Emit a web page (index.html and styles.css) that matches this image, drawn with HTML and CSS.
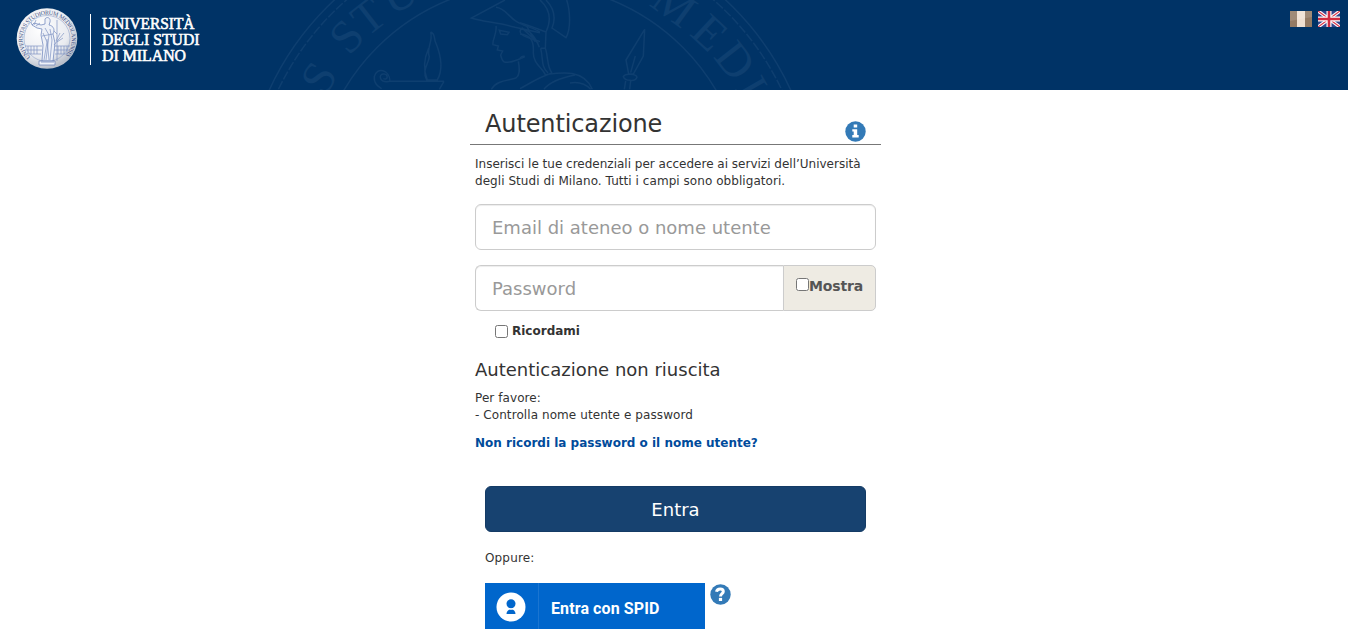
FILE: index.html
```html
<!DOCTYPE html>
<html lang="it">

<head>
    <meta charset="UTF-8" />
    <meta name="viewport" content="width=device-width, initial-scale=1.0" />
    <title>Autenticazione - Università degli Studi di Milano</title>
    <link rel="stylesheet" href="styles.css">
</head>

<body>

    <header class="header">
        <!-- watermark of the seal -->
        <svg class="header-bg" width="560" height="90" viewBox="260 0 560 90" aria-hidden="true">
            <g class="wm-line">
                <circle cx="530" cy="210" r="287" />
                <circle cx="530" cy="210" r="279" stroke-dasharray="9 2" />
                <circle cx="530" cy="200" r="216" />
                <g transform="translate(260 0) scale(.3333)" stroke-width="4.5">
                    <path d="M735 0L634 54C670 66 720 68 765 82L840 98M708 22C735 24 745 50 770 65C795 80 820 82 840 96M718 91L747 97L742 104L722 102ZM708 78C712 100 696 120 699 134L715 138L712 150L728 153L722 165C728 190 735 188 750 186C765 184 780 176 795 170M775 184C780 210 780 225 768 234C745 242 710 240 694 268M785 84C770 105 795 110 840 125" />
                    <path d="M512 96C528 102 520 115 528 130C540 160 552 205 532 240H500C485 210 505 195 508 170C498 145 520 125 512 96M506 145C492 175 490 210 502 240M552 244H390C355 250 355 220 372 222C386 224 384 242 370 236M390 244C390 210 350 198 343 230C341 252 355 260 365 266M552 244L538 268" />
                </g>
                <g transform="translate(520 0) scale(.3333)" stroke-width="4.5">
                    <path d="M60 0C82 20 100 50 78 96C50 85 20 75 0 68M78 0C102 25 108 55 96 84L138 113C154 85 150 30 140 0M0 88C25 85 45 108 58 142M0 102C30 105 42 120 40 155C38 190 68 205 76 224M78 96L76 145C85 170 80 200 96 219M62 145C70 175 62 200 84 219M62 145H76M5 83L55 130M20 78L45 125M76 224C120 218 190 205 217 268M96 219C55 232 30 250 0 266M165 225C115 235 85 250 72 268M150 249C180 244 200 255 212 268M0 175C8 165 10 170 14 168" />
                    <path d="M374 88L370 168L340 222H326L318 180ZM346 168L332 218M310 230C315 218 350 222 351 232C347 246 315 243 310 230ZM317 243L313 268M332 243L329 268" />
                </g>
            </g>
            <g class="wm-text">
                <text transform="translate(332 86) rotate(-58)">S</text>
                <text transform="translate(358 47) rotate(-47)">S</text>
                <text transform="translate(378 29) rotate(-38)">T</text>
                <text transform="translate(406 8) rotate(-27)">U</text>
                <text transform="translate(665 17) rotate(36)">M</text>
                <text transform="translate(699 44) rotate(43)">E</text>
                <text transform="translate(723 70) rotate(52)">D</text>
                <text transform="translate(738 95) rotate(60)">I</text>
            </g>
        </svg>

        <svg class="logo" width="210" height="80" viewBox="0 0 210 80" role="img" aria-label="Università degli Studi di Milano">
            <defs>
                <radialGradient id="seal" cx=".4" cy=".35" r=".65">
                    <stop offset="0" stop-color="#fff" />
                    <stop offset=".7" stop-color="#e9ebf0" />
                    <stop offset="1" stop-color="#b9bfca" />
                </radialGradient>
                <path id="seal-path" d="M30.500 57A24.500 24.500 0 1 1 64 57" />
            </defs>
            <circle cx="47" cy="38.500" r="30.300" fill="url(#seal)" />
            <circle class="seal-ring" cx="47" cy="38.500" r="23" />
            <text class="seal-text"><textPath href="#seal-path" textLength="114">UNIVERSITAS STUDIORUM MEDIOLANENSIS</textPath></text>
            <g class="seal-line">
                <path d="M25 46H42M54 46H70M26 54H41M55 54H68M25 50H42M54 50H70M28 46V54M31 46V54M34 46V54M37 46V54M58 46V54M61 46V54M64 46V54M67 46V54" />
                <path class="seal-figure" d="M45 19C47 16 51 18 50 22L49 25C54 26 55 30 53 34L55 43L53 61H42L43 45L41 35L42 29L37 28L32 25L34 23L41 25L45 24Z" />
                <path d="M45 28L49 35L46 60M50 29L52 40L50 60M43 33L47 42L44 60M42 36L53 34M47 39L49 60M34 25L36 20M32 25L31 22M36 26L40 23M57 20V61M54 45L64 33M56 41L60 33M57 42L63 38M54 31L57 34" />
                <path class="seal-figure" d="M39 61H55V65H39ZM41 62H54" />
            </g>
            <path d="M90.500 14V65" stroke="#fff" />
            <g class="logo-text">
                <text x="102" y="28.500" textLength="92.500" lengthAdjust="spacingAndGlyphs">UNIVERSITÀ</text>
                <text x="102" y="45" textLength="97.500" lengthAdjust="spacingAndGlyphs">DEGLI STUDI</text>
                <text x="102" y="61" textLength="84" lengthAdjust="spacingAndGlyphs">DI MILANO</text>
            </g>
        </svg>

        <nav class="langs">
            <svg width="22" height="16" viewBox="0 0 22 16" role="img" aria-label="Italiano">
                <path fill="#947a63" d="M0 0H22V16H0Z" />
                <path fill="#f0e0d1" d="M7 0H15V16H7Z" />
                <path fill="#fff" opacity=".13" d="M0 0H22V6L0 10Z" />
            </svg>
            <svg width="22" height="16" viewBox="0 0 22 16" role="img" aria-label="English">
                <path fill="#33478c" d="M0 0H22V16H0Z" />
                <path stroke="#fff" stroke-width="3.400" d="M0 0L22 16M22 0L0 16" />
                <path stroke="#d8364a" stroke-width="1.200" d="M0 0L22 16M22 0L0 16" />
                <path stroke="#fff" stroke-width="5" d="M11 0V16M0 8H22" />
                <path stroke="#d12c40" stroke-width="2.600" d="M11 0V16M0 8H22" />
            </svg>
        </nav>
    </header>

    <main class="login">
        <div class="login-title">
            <h1>Autenticazione</h1>
            <svg class="icon" width="21" height="21" viewBox="0 0 21 21" role="img" aria-label="Info">
                <circle cx="10.500" cy="10.500" r="10.200" />
                <path fill="#fff" d="M8.700 3.500H12.200V6.500H8.700ZM7.300 8.300H12.200V14H13.700V16.500H7.300V14H8.700V10.500H7.300Z" />
            </svg>
        </div>

        <form class="login-form">
            <p class="intro">Inserisci le tue credenziali per accedere ai servizi dell’Università<br /><span class="intro-end">degli Studi di Milano. Tutti i campi sono obbligatori.</span></p>
            <input type="text" class="field" placeholder="Email di ateneo o nome utente" />
            <div class="field-group">
                <input type="password" class="field" placeholder="Password" />
                <label class="addon"><input type="checkbox" /><span>Mostra</span></label>
            </div>
            <label class="remember"><input type="checkbox" /><span>Ricordami</span></label>

            <h2>Autenticazione non riuscita</h2>
            <p class="error">Per favore:<br />- Controlla nome utente e password</p>
            <a class="forgot" href="#">Non ricordi la password o il nome utente?</a>

            <button type="button" class="submit">Entra</button>
            <p class="or">Oppure:</p>
            <div class="spid-row">
                <a class="spid" href="#">
                    <span class="spid-icon">
                        <svg width="30" height="30" viewBox="0 0 30 30" aria-hidden="true">
                            <circle cx="15" cy="15" r="14.500" fill="#fff" />
                            <circle cx="15" cy="11.800" r="4.500" />
                            <path d="M10.500 22C10.500 15.700 19.500 15.700 19.500 22Z" />
                            <path fill="none" stroke="#fff" d="M11 16.300Q15 18.300 19 16.300" />
                        </svg>
                    </span>
                    <span class="spid-label">Entra con SPID</span>
                </a>
                <svg class="icon" width="21" height="21" viewBox="0 0 21 21" role="img" aria-label="Aiuto">
                    <circle cx="10.500" cy="10.500" r="10.200" />
                    <path fill="none" stroke="#fff" stroke-width="3" d="M6.500 7.700C7.300 3.800 13.300 4.200 13.300 7.400C13.300 9.800 10.500 9.500 10.500 12.500" />
                    <path fill="#fff" d="M8.900 13.900H12.100V17H8.900Z" />
                </svg>
            </div>
        </form>
    </main>

</body>

</html>
```
FILE: styles.css
```css
* {
    box-sizing: border-box;
}

body {
    margin: 0;
    overflow: hidden;
    background-color: #fff;
    font-family: Verdana, "DejaVu Sans", sans-serif;
    font-size: 12px;
    line-height: 17px;
    color: #333;
}

h1,
h2,
p {
    margin: 0;
    font-weight: 400;
}

svg {
    display: block;
    flex: none;
}

.header {
    position: relative;
    display: flex;
    justify-content: space-between;
    height: 90px;
    background-color: #003366;
}

.header-bg {
    position: absolute;
    top: 0;
    left: 260px;
}

.wm-line {
    fill: none;
    stroke: #0e3f70;
    stroke-width: 1.5;
}

.wm-text {
    fill: #0e3f70;
    font-family: "Liberation Serif", serif;
    font-size: 47px;
    text-anchor: middle;
}

.logo {
    position: relative;
}

.logo-text {
    fill: #fff;
    stroke: #fff;
    stroke-width: 0.6;
    font-family: "Liberation Serif", serif;
    font-size: 16.5px;
}

.seal-ring,
.seal-line {
    fill: none;
    stroke: #7f94c3;
    stroke-width: 0.7;
}

.seal-ring {
    stroke-width: 0.5;
}

.seal-figure {
    fill: #eef1f8;
    stroke: #6780b9;
}

.seal-text {
    fill: #3c4f83;
    font-family: "Liberation Serif", serif;
    font-size: 6px;
}

.langs {
    display: flex;
    gap: 6px;
    padding: 11px 8px 0 0;
}

.login {
    width: 411px;
    margin-left: 470px;
}

.login-title {
    display: flex;
    justify-content: space-between;
    height: 55px;
    padding: 20px 15px 0;
    border-bottom: 1px solid #777;
}

.login-title h1 {
    font-size: 24px;
    line-height: 28px;
    letter-spacing: -0.12px;
}

.icon {
    fill: #337ab7;
}

.login-title .icon {
    margin-top: 11px;
}

.login-form {
    display: flex;
    flex-direction: column;
    padding: 11px 5px 0;
}

.intro {
    margin-bottom: 14px;
    white-space: nowrap;
}

.intro-end {
    letter-spacing: 0.055px;
}

.field {
    width: 100%;
    height: 46px;
    padding: 10px 16px;
    border: 1px solid #ccc;
    border-radius: 6px;
    font-family: inherit;
    font-size: 18px;
    box-shadow: inset 0 1px 1px rgba(0, 0, 0, 0.075);
}

.field::placeholder {
    color: #999;
    opacity: 1;
}

.field-group {
    display: flex;
    margin-top: 15px;
}

.field-group .field {
    flex: 1;
    min-width: 0;
    border-right: 0;
    border-radius: 6px 0 0 6px;
}

input[type="checkbox"] {
    width: 13px;
    height: 13px;
    margin: 0;
}

.addon {
    display: flex;
    width: 93px;
    padding: 12px 0 0 12px;
    background-color: #eeebe3;
    border: 1px solid #ccc;
    border-radius: 0 5px 5px 0;
    font-size: 14px;
    font-weight: 700;
    letter-spacing: -0.15px;
    color: #555;
}

.remember {
    display: flex;
    gap: 4px;
    margin: 12px 0 0 20px;
    font-weight: 700;
}

.remember input[type="checkbox"] {
    margin-top: 2px;
}

.login-form h2 {
    margin-top: 19px;
    font-size: 18px;
    line-height: 22px;
}

.error {
    margin-top: 9px;
    letter-spacing: 0.08px;
}

.forgot {
    margin-top: 11px;
    font-weight: 700;
    color: #004b9b;
    text-decoration: none;
}

.submit {
    height: 46px;
    margin: 34px 10px 0;
    padding: 0;
    background-color: #174270;
    border: 1px solid #143b65;
    border-radius: 6px;
    font-family: inherit;
    font-size: 18px;
    color: #fff;
}

.or {
    margin: 18px 0 0 10px;
    letter-spacing: 0.15px;
}

.spid-row {
    display: flex;
    gap: 5px;
    margin: 16px 0 0 10px;
}

.spid {
    display: flex;
    align-items: center;
    width: 220px;
    height: 46px;
    background-color: #0066cc;
    color: #fff;
    text-decoration: none;
}

.spid-icon {
    display: flex;
    width: 54px;
    height: 46px;
    padding: 9px 0 0 11px;
    border-right: 1px solid #1a75d1;
    fill: #0066cc;
}

.spid-label {
    padding: 4px 0 0 12px;
    font-family: Roboto, sans-serif;
    font-size: 16px;
    font-weight: 700;
    letter-spacing: 0.1px;
}

.spid-row .icon {
    margin-top: 1px;
}
```
